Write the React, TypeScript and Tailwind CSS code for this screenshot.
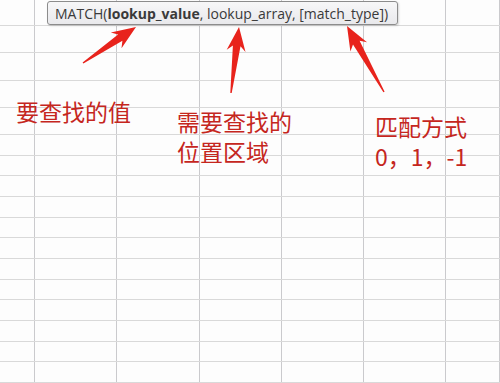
import React from 'react';

const COLS = [35, 82, 83, 82, 82, 82, 54];
const ROWS = [26, 27, 28, 27, 27, 21, 20, 21, 21, 20, 21, 21, 20, 21, 21, 20, 21];

const ARROWS = [
  { tail: [83, 63], tip: [136, 27] },
  { tail: [231, 93], tip: [239, 27] },
  { tail: [384, 92], tip: [347, 26] },
];

// tapered red arrow, thin at the tail, wide head at the tip
function arrowPoints(tail: number[], tip: number[]) {
  const dx = tip[0] - tail[0];
  const dy = tip[1] - tail[1];
  const len = Math.hypot(dx, dy);
  const ux = dx / len;
  const uy = dy / len;
  const nx = -uy;
  const ny = ux;
  const head = 22;
  const bx = tip[0] - ux * head;
  const by = tip[1] - uy * head;
  const pt = (x: number, y: number) => `${x.toFixed(1)},${y.toFixed(1)}`;
  return [
    pt(tail[0] + nx * 0.7, tail[1] + ny * 0.7),
    pt(bx + ux * 3 + nx * 3.8, by + uy * 3 + ny * 3.8),
    pt(bx - ux * 2 + nx * 9.5, by - uy * 2 + ny * 9.5),
    pt(tip[0], tip[1]),
    pt(bx - ux * 2 - nx * 9.5, by - uy * 2 - ny * 9.5),
    pt(bx + ux * 3 - nx * 3.8, by + uy * 3 - ny * 3.8),
    pt(tail[0] - nx * 0.7, tail[1] - ny * 0.7),
  ].join(' ');
}

const Sheet = () => (
  <div className="flex flex-col">
    {ROWS.map((h, r) => (
      <div key={r} className="flex border-b border-[#d9d9d9]" style={{ height: h }}>
        {COLS.map((w, c) => (
          <div key={c} className="shrink-0 border-r border-[#cacacd]" style={{ width: w }} />
        ))}
      </div>
    ))}
  </div>
);

const Note = ({ lines, className }: { lines: string[]; className: string }) => (
  <div
    className={`absolute flex flex-col gap-[4px] text-[23px] leading-[26px] text-[#c5261e] font-['Noto_Sans_CJK_SC',sans-serif] whitespace-nowrap ${className}`}
  >
    {lines.map((l) => (
      <div key={l}>{l}</div>
    ))}
  </div>
);

export default function App() {
  return (
    <div className="relative w-[500px] h-[383px] overflow-hidden bg-[#fdfdfd]">
      <Sheet />

      {/* function tooltip */}
      <div className="absolute left-[47px] top-[1px] w-[351px] h-[24px] rounded-[3px] border border-[#8c8c8c] bg-gradient-to-b from-[#f7f7f8] to-[#e9e9ec] shadow-[1px_1px_2px_rgba(0,0,0,0.15)] flex items-center pl-[7px] text-[14px] text-[#3a3a3a] font-['Open_Sans',sans-serif] whitespace-nowrap">
        MATCH(<span className="font-bold">lookup_value</span>, lookup_array, [match_type])
      </div>

      <svg className="absolute inset-0" width="500" height="383">
        {ARROWS.map((a, i) => (
          <polygon key={i} points={arrowPoints(a.tail, a.tip)} fill="#e8231c" />
        ))}
      </svg>

      <Note lines={['要查找的值']} className="left-[16px] top-[98px]" />
      <Note lines={['需要查找的', '位置区域']} className="left-[177px] top-[108px]" />
      <Note lines={['匹配方式', '0，1，-1']} className="left-[375px] top-[113px]" />
    </div>
  );
}
